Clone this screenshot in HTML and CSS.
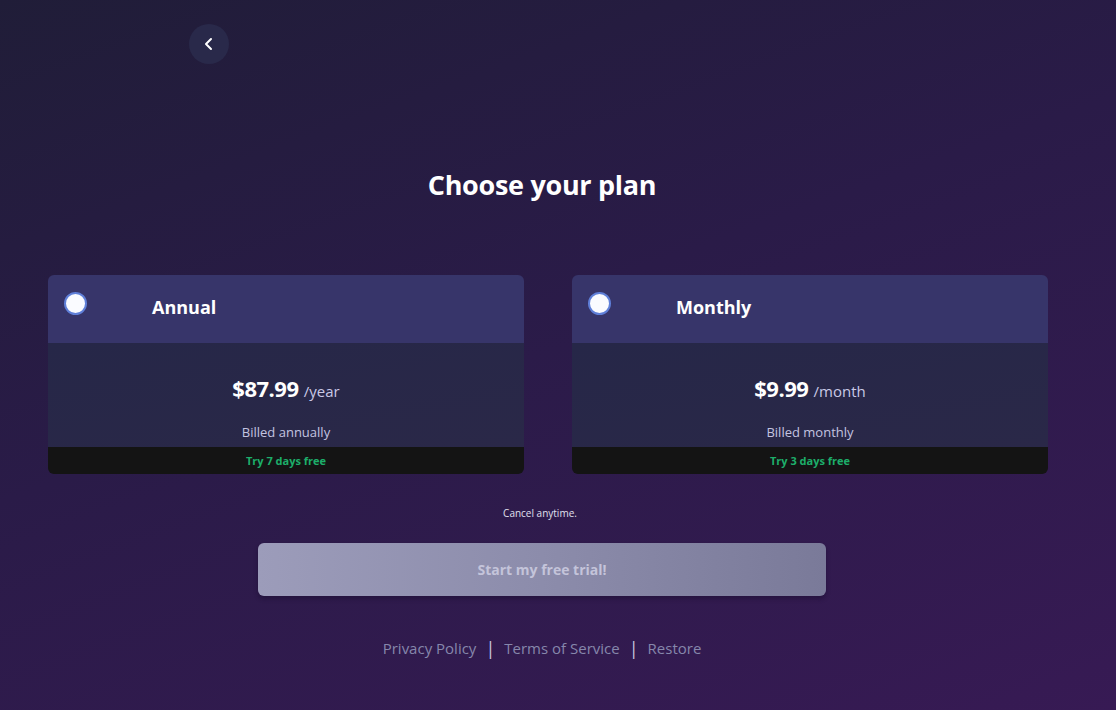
FILE: index.html
```html
<!DOCTYPE html>
<html lang="en">
<head>
    <meta charset="UTF-8">
    <meta name="viewport" content="width=device-width, initial-scale=1.0">
    <title>Choose your plan</title>
    <link rel="stylesheet" href="styles.css">
</head>
<body>
    <header class="top-bar">
        <button class="back-button" aria-label="Back">
            <svg width="14" height="14" viewBox="0 0 14 14">
                <path d="M9 2 L4 7 L9 12" fill="none" stroke="#fff" stroke-width="2" stroke-linecap="round" stroke-linejoin="round"/>
            </svg>
        </button>
    </header>
    <main>
        <h1 class="page-title">Choose your plan</h1>
        <section class="plans">
            <div class="plan-card">
                <div class="plan-head">
                    <span class="radio"></span>
                    <span class="plan-name">Annual</span>
                </div>
                <div class="plan-body">
                    <p class="price">$87.99 <span class="period">/year</span></p>
                    <p class="billed">Billed annually</p>
                </div>
                <div class="plan-foot">Try 7 days free</div>
            </div>
            <div class="plan-card">
                <div class="plan-head">
                    <span class="radio"></span>
                    <span class="plan-name">Monthly</span>
                </div>
                <div class="plan-body">
                    <p class="price">$9.99 <span class="period">/month</span></p>
                    <p class="billed">Billed monthly</p>
                </div>
                <div class="plan-foot">Try 3 days free</div>
            </div>
        </section>
        <p class="cancel-note">Cancel anytime.</p>
        <div class="trial-container">
            <button class="trial-button">Start my free trial!</button>
        </div>
        <footer class="links">
            <a href="#">Privacy Policy</a>
            <span class="sep">|</span>
            <a href="#">Terms of Service</a>
            <span class="sep">|</span>
            <a href="#">Restore</a>
        </footer>
    </main>
</body>
</html>
```

FILE: styles.css
```css
* {
    margin: 0;
    padding: 0;
    box-sizing: border-box;
}

html, body {
    height: 100%;
}

body {
    font-family: 'Open Sans', sans-serif;
    color: #fff;
    background: linear-gradient(160deg, #201d38 0%, #2a1b48 45%, #371a54 100%);
    overflow: hidden;
}

.top-bar {
    padding: 24px 0 0 189px;
}

.back-button {
    width: 40px;
    height: 40px;
    border-radius: 50%;
    border: none;
    background-color: #29294a;
    display: flex;
    align-items: center;
    justify-content: center;
    cursor: pointer;
}

.page-title {
    text-align: center;
    font-size: 27px;
    font-weight: 700;
    letter-spacing: -0.3px;
    margin-top: 102px;
    margin-left: -32px;
}

.plans {
    display: flex;
    gap: 48px;
    padding: 0 68px 0 48px;
    margin-top: 72px;
}

.plan-card {
    width: 476px;
    border-radius: 6px;
    overflow: hidden;
}

.plan-head {
    height: 68px;
    background-color: #37356a;
    display: flex;
    align-items: flex-start;
    padding: 17px 0 0 16px;
}

.radio {
    width: 23px;
    height: 23px;
    border-radius: 50%;
    background-color: #fafbff;
    border: 2px solid #5f7fd8;
    flex-shrink: 0;
}

.plan-name {
    margin-left: 65px;
    margin-top: 3px;
    font-size: 18px;
    font-weight: 700;
}

.plan-body {
    height: 104px;
    background: linear-gradient(170deg, #262748 0%, #2a2848 100%);
    text-align: center;
    padding-top: 30px;
}

.price {
    font-size: 22px;
    font-weight: 700;
    letter-spacing: -0.5px;
}

.period {
    font-size: 15px;
    font-weight: 400;
    color: #c9c9e6;
    letter-spacing: 0;
}

.billed {
    margin-top: 20px;
    font-size: 13px;
    color: #c4c4e0;
}

.plan-foot {
    height: 27px;
    background-color: #141414;
    color: #1dae6a;
    font-size: 11px;
    font-weight: 700;
    text-align: center;
    line-height: 27px;
}

.cancel-note {
    text-align: center;
    font-size: 10px;
    color: #e0e0ee;
    margin-top: 32px;
    margin-left: -36px;
}

.trial-container {
    display: flex;
    justify-content: center;
    margin-top: 23px;
    margin-left: -32px;
}

.trial-button {
    width: 568px;
    height: 53px;
    border: none;
    border-radius: 6px;
    background: linear-gradient(90deg, #9c9cba 0%, #8c8cab 50%, #7a7a99 100%);
    color: #c4c4da;
    font-family: 'Open Sans', sans-serif;
    font-size: 14px;
    font-weight: 700;
    box-shadow: 0 3px 4px rgba(20, 10, 40, 0.4);
}

.links {
    display: flex;
    justify-content: center;
    align-items: center;
    gap: 9px;
    margin-top: 40px;
    margin-left: -32px;
    font-size: 15px;
}

.links a {
    color: #8687ab;
    text-decoration: none;
}

.sep {
    color: #c8c8de;
    font-size: 18px;
}
```
